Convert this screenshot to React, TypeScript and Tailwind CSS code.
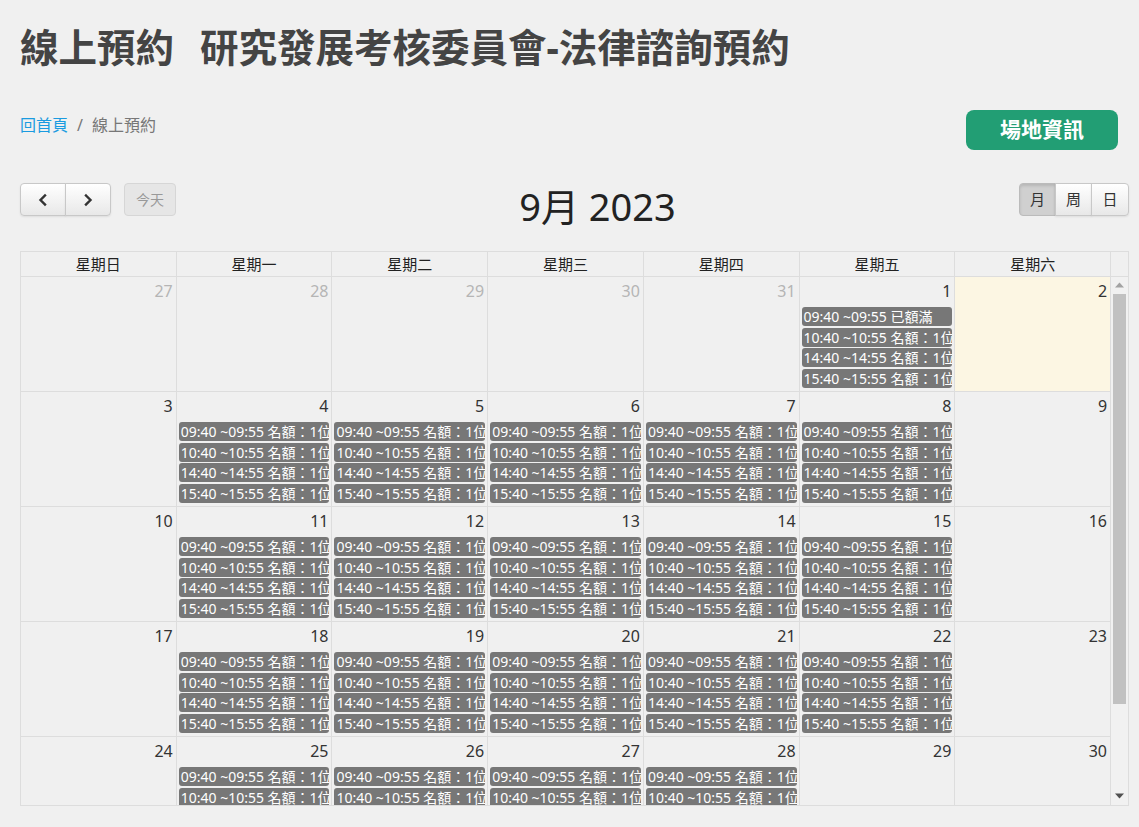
import React from "react";

type DayCell = {
  day: number;
  otherMonth?: boolean;
  today?: boolean;
  events: string[];
};

const slots = ["09:40 ~09:55", "10:40 ~10:55", "14:40 ~14:55", "15:40 ~15:55"];
const weekdays = ["星期日", "星期一", "星期二", "星期三", "星期四", "星期五", "星期六"];

const openSlots = slots.map((slot) => `${slot} 名額：1位`);

const buildWeeks = (): DayCell[][] => {
  const weeks: DayCell[][] = [];
  weeks.push([
    { day: 27, otherMonth: true, events: [] },
    { day: 28, otherMonth: true, events: [] },
    { day: 29, otherMonth: true, events: [] },
    { day: 30, otherMonth: true, events: [] },
    { day: 31, otherMonth: true, events: [] },
    { day: 1, events: [`${slots[0]} 已額滿`, ...openSlots.slice(1)] },
    { day: 2, today: true, events: [] }
  ]);
  for (let start = 3; start <= 24; start += 7) {
    const week: DayCell[] = [];
    for (let i = 0; i < 7; i++) {
      const day = start + i;
      const weekday = i > 0 && i < 6 && day !== 29;
      week.push({ day, events: weekday ? openSlots : [] });
    }
    weeks.push(week);
  }
  return weeks;
};

const ChevronLeft = () => (
  <svg width="14" height="14" viewBox="0 0 14 14" fill="none">
    <path d="M9 2.5 4.5 7 9 11.5" stroke="#333" strokeWidth="2.4" strokeLinecap="square" />
  </svg>
);

const ChevronRight = () => (
  <svg width="14" height="14" viewBox="0 0 14 14" fill="none">
    <path d="M5 2.5 9.5 7 5 11.5" stroke="#333" strokeWidth="2.4" strokeLinecap="square" />
  </svg>
);

const btn =
  "flex items-center justify-center border border-[#c8c8c8] bg-gradient-to-b from-white to-[#e8e8e8] shadow-[0_1px_2px_rgba(0,0,0,0.08)]";

export default function App() {
  const weeks = buildWeeks();

  return (
    <div className="min-h-[827px] bg-[#f0f0f0] pl-[20px] pr-[10px] pt-[24px] font-['Noto_Sans','Noto_Sans_CJK_TC',sans-serif] text-[#333]">
      <h1 className="flex items-center text-[38.5px] font-bold leading-[46px] text-[#444]">
        <span>線上預約</span>
        <span className="ml-[26px]">研究發展考核委員會-法律諮詢預約</span>
      </h1>

      <div className="mt-[40px] flex items-start justify-between">
        <nav className="mt-[5px] flex items-center text-[16px] leading-[20px]">
          <a className="text-[#1a9be0]">回首頁</a>
          <span className="mx-[9px] text-[#777]">/</span>
          <span className="text-[#777]">線上預約</span>
        </nav>
        <button
          type="button"
          className="mr-[11px] h-[40px] w-[152px] rounded-[8px] bg-[#229e74] text-[21px] font-bold text-white"
        >
          場地資訊
        </button>
      </div>

      <div className="mt-[33px] flex items-start justify-between">
        <div className="flex items-center gap-[13px]">
          <div className="flex">
            <button type="button" className={`${btn} h-[33px] w-[46px] rounded-l-[4px]`}>
              <ChevronLeft />
            </button>
            <button type="button" className={`${btn} -ml-px h-[33px] w-[46px] rounded-r-[4px]`}>
              <ChevronRight />
            </button>
          </div>
          <button
            type="button"
            className="h-[33px] w-[52px] rounded-[4px] border border-[#d6d6d6] bg-[#e6e6e6] text-[14px] text-[#999]"
          >
            今天
          </button>
        </div>
        <h2 className="text-[38px] leading-[46px] text-[#222]">9月 2023</h2>
        <div className="flex justify-end">
          <button
            type="button"
            className="flex h-[33px] w-[37px] items-center justify-center rounded-l-[4px] border border-[#bbb] bg-[#d0d0d0] text-[15px] text-[#333] shadow-[inset_0_2px_3px_rgba(0,0,0,0.12)]"
          >
            月
          </button>
          <button type="button" className={`${btn} -ml-px h-[33px] w-[37px] text-[15px] text-[#333]`}>
            周
          </button>
          <button type="button" className={`${btn} -ml-px h-[33px] w-[38px] rounded-r-[4px] text-[15px] text-[#333]`}>
            日
          </button>
        </div>
      </div>

      <div className="mt-[22px] border border-[#ddd]">
        <div className="flex border-b border-[#ddd]">
          {weekdays.map((name) => (
            <div
              key={name}
              className="flex h-[24px] flex-1 items-center justify-center border-r border-[#ddd] text-[15px] text-[#222]"
            >
              {name}
            </div>
          ))}
          <div className="w-[17px]" />
        </div>

        <div className="flex">
          <div className="h-[528px] flex-1 overflow-hidden">
            {weeks.map((week, wi) => (
              <div key={wi} className="flex h-[115px] border-b border-[#ddd]">
                {week.map((cell) => (
                  <div
                    key={`${wi}-${cell.day}`}
                    className={`flex-1 overflow-hidden border-r border-[#ddd] ${cell.today ? "bg-[#fcf6e3]" : ""}`}
                  >
                    <div
                      className={`pr-[3px] pt-[3px] text-right text-[16px] leading-[22px] ${
                        cell.otherMonth ? "text-[#b5b5b5]" : "text-[#333]"
                      }`}
                    >
                      {cell.day}
                    </div>
                    <div className="flex flex-col gap-[1.5px] pt-[5px]">
                      {cell.events.map((ev) => (
                        <div
                          key={ev}
                          className="mx-[2px] h-[19px] overflow-hidden whitespace-nowrap rounded-[3px] bg-[#777] pl-[2px] text-[14px] leading-[19px] text-white"
                        >
                          {ev}
                        </div>
                      ))}
                    </div>
                  </div>
                ))}
              </div>
            ))}
          </div>

          <div className="flex w-[17px] flex-col items-center bg-[#f1f1f1]">
            <svg width="9" height="6" viewBox="0 0 9 6" className="mt-[5px]">
              <path d="M0 5.5 4.5 0.5 9 5.5Z" fill="#a3a3a3" />
            </svg>
            <div className="mt-[6px] h-[410px] w-[13px] bg-[#c1c1c1]" />
            <div className="flex-1" />
            <svg width="9" height="6" viewBox="0 0 9 6" className="mb-[6px]">
              <path d="M0 0.5 4.5 5.5 9 0.5Z" fill="#505050" />
            </svg>
          </div>
        </div>
      </div>
    </div>
  );
}
